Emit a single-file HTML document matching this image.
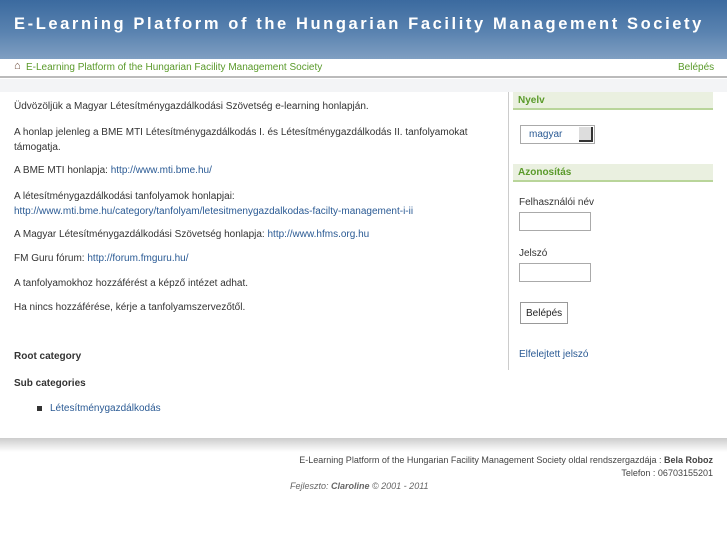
<!DOCTYPE html>
<html><head><meta charset="utf-8"><style>
*{margin:0;padding:0;box-sizing:border-box}
body{width:727px;height:545px;overflow:hidden;background:#fff;font-family:"Liberation Sans",sans-serif;font-size:10px;color:#333;position:relative}
.a{position:absolute;white-space:nowrap}
a{color:#2a5a94;text-decoration:none}
#hd{position:absolute;left:0;top:0;width:727px;height:59px;background:linear-gradient(#3b6a9f,#5a83b0 55%,#809fc2)}
#hd span{position:absolute;left:14px;top:15px;color:#fff;font-weight:bold;font-size:16.5px;letter-spacing:2.6px}
#bar{position:absolute;left:0;top:59px;width:727px;height:19px;border-bottom:2px solid #bbb;background:#fff}
#band{position:absolute;left:0;top:79px;width:727px;height:13px;background:#f3f4f6}
.g{color:#5a9a2a}
.box{position:absolute;left:513px;width:200px;height:18px;background:#eaf0e0;border-bottom:2px solid #b9d59a;color:#5a9a2a;font-weight:bold;padding:3px 5px}
.in{position:absolute;left:519px;width:72px;height:19px;border:1px solid #aaa;background:#fff}
</style></head><body>
<div id="hd"><span>E-Learning Platform of the Hungarian Facility Management Society</span></div>
<div id="bar"></div><div id="band"></div>
<div class="a" style="left:14px;top:60px;color:#6b4a3a;font-size:11px;font-weight:bold">&#8962;</div>
<div class="a g" style="left:26px;top:62px">E-Learning Platform of the Hungarian Facility Management Society</div>
<div class="a g" style="left:678px;top:62px">Belépés</div>
<div style="position:absolute;left:508px;top:92px;width:1px;height:278px;background:#ccc"></div>
<div class="a" style="left:14px;top:101px">Üdvözöljük a Magyar Létesítménygazdálkodási Szövetség e-learning honlapján.</div>
<div class="a" style="left:14px;top:125px;line-height:15px">A honlap jelenleg a BME MTI Létesítménygazdálkodás I. és Létesítménygazdálkodás II. tanfolyamokat<br>támogatja.</div>
<div class="a" style="left:14px;top:165px">A BME MTI honlapja: <a>http://www.mti.bme.hu/</a></div>
<div class="a" style="left:14px;top:189px;line-height:15px">A létesítménygazdálkodási tanfolyamok honlapjai:<br><a>http://www.mti.bme.hu/category/tanfolyam/letesitmenygazdalkodas-facilty-management-i-ii</a></div>
<div class="a" style="left:14px;top:229px">A Magyar Létesítménygazdálkodási Szövetség honlapja: <a>http://www.hfms.org.hu</a></div>
<div class="a" style="left:14px;top:253px">FM Guru fórum: <a>http://forum.fmguru.hu/</a></div>
<div class="a" style="left:14px;top:278px">A tanfolyamokhoz hozzáférést a képző intézet adhat.</div>
<div class="a" style="left:14px;top:302px">Ha nincs hozzáférése, kérje a tanfolyamszervezőtől.</div>
<div class="a" style="left:14px;top:351px;font-weight:bold">Root category</div>
<div class="a" style="left:14px;top:378px;font-weight:bold">Sub categories</div>
<div class="a" style="left:37px;top:406px;width:5px;height:5px;background:#333"></div>
<div class="a" style="left:50px;top:403px"><a>Létesítménygazdálkodás</a></div>
<div class="box" style="top:92px">Nyelv</div>
<div class="a" style="left:520px;top:125px;width:75px;height:19px;border:1px solid #aaa;background:#fff"><span style="position:absolute;left:8px;top:3px;color:#2a5a94">magyar</span><span style="position:absolute;right:1px;top:1px;width:14px;height:15px;background:#ddd;border-right:2px solid #333;border-bottom:2px solid #333"></span></div>
<div class="box" style="top:164px">Azonosítás</div>
<div class="a" style="left:519px;top:197px">Felhasználói név</div>
<div class="in" style="top:212px"></div>
<div class="a" style="left:519px;top:248px">Jelszó</div>
<div class="in" style="top:263px"></div>
<div class="a" style="left:520px;top:302px;width:48px;height:22px;border:1px solid #999;background:#fff;padding:5px 5px;color:#222">Belépés</div>
<div class="a" style="left:519px;top:349px"><a>Elfelejtett jelszó</a></div>
<div style="position:absolute;left:0;top:438px;width:727px;height:14px;background:linear-gradient(#ccc,#e6e6e6 50%,#fff)"></div>
<div class="a" style="right:14px;top:455px;font-size:9px;color:#444">E-Learning Platform of the Hungarian Facility Management Society oldal rendszergazdája : <b>Bela Roboz</b></div>
<div class="a" style="right:14px;top:468px;font-size:9px;color:#444">Telefon : 06703155201</div>
<div class="a" style="left:290px;top:481px;font-size:9px;color:#666;font-style:italic">Fejleszto: <b>Claroline</b> © 2001 - 2011</div>
</body></html>
